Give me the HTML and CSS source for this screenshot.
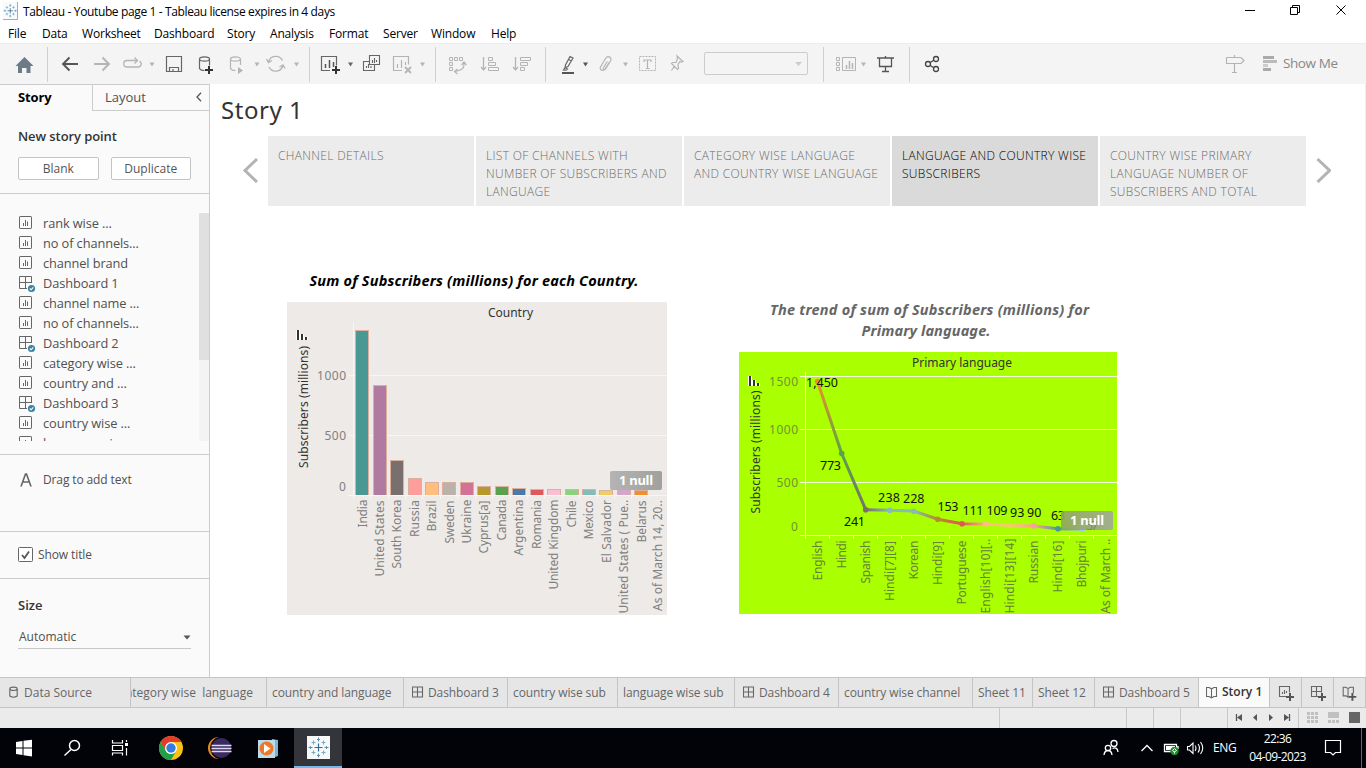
FILE: index.html
```html
<!DOCTYPE html>
<html lang="en">
<head>
<meta charset="utf-8">
<title>Tableau - Youtube page 1</title>
<link rel="stylesheet" href="styles.css">
</head>
<body>
<svg class="defs" width="0" height="0" aria-hidden="true">
  <symbol id="sheet" viewBox="0 0 18 18"><rect x="1.500" y="1.500" width="12" height="12" rx=".6"/><path d="M5.500 8v3M7.500 5v6M9.500 6.500v4.500"/></symbol>
  <symbol id="dash" viewBox="0 0 18 18"><path d="M13.500 8V1.500h-12v12h7.500M7.500 1.500v12M1.500 7.500h12"/><circle cx="13.500" cy="13.500" r="3.600" fill="#3a83a3" stroke="none"/><path d="M11.800 13.500l1.300 1.300 2.200-2.500" stroke="#fff" stroke-width="1.100"/></symbol>
  <symbol id="grid" viewBox="0 0 12 12"><path d="M.5 .5h10v10h-10zM5.500 .5v10M.5 5.500h10"/></symbol>
  <symbol id="book" viewBox="0 0 12 13"><path d="M.5 1.500h2.500l2.500 1.300 2.500-1.300h2.500v9h-2.500l-2.500 1.300-2.500-1.300h-2.500zM5.500 3v8.500"/></symbol>
  <symbol id="mark" viewBox="0 0 22 22"><path d="M11 7v8M7 11h8" stroke="#356c93" stroke-width="1.200"/><path d="M6 4v4M4 6h4M16 4v4M14 6h4M6 14v4M4 16h4M16 14v4M14 16h4" stroke="#6fb0d0" stroke-width="1.100"/><path d="M11 1v4M9.500 3h3M11 17v4M9.500 19h3M1 11h4M3 9.500v3M17 11h4M19 9.500v3" stroke="#5d90b2"/></symbol>
</svg>
<div class="app">
  <header class="titlebar">
    <svg class="appicon" viewBox="0 0 16 18"><rect x="0" y="0" width="15" height="18" fill="#f8fafb"/><path d="M0 17.500h14.500V0" stroke="#aaa"/><use href="#mark" x="0" y="1.500" width="14.500" height="14.500"/></svg>
    <span class="apptitle">Tableau - Youtube page 1 - Tableau license expires in 4 days</span>
    <svg class="winctl" viewBox="1230 0 136 22" stroke="#000"><path d="M1245 10.500h10M1290.500 7.500h7v7h-7zM1292.500 7.500v-2h7v7h-2M1336.500 5.500l9 9M1345.500 5.500l-9 9"/></svg>
  </header>
  <nav class="menu"><span class="m1">File</span><span class="m2">Data</span><span class="m3">Worksheet</span><span class="m4">Dashboard</span><span class="m5">Story</span><span class="m6">Analysis</span><span class="m7">Format</span><span class="m8">Server</span><span class="m9">Window</span><span class="m10">Help</span></nav>
  <div class="toolbar">
    <svg class="g g1" viewBox="0 44 47 40"><path d="M15.500 66l9-9 9 9h-3v7h-4v-5h-4.500v5h-4v-7z" fill="#6d7b89" stroke="none"/></svg>
    <svg class="g g2" viewBox="48 44 261 40">
      <g stroke="#555" stroke-width="1.900"><path d="M63 64h15M69.500 57.500L63 64l6.500 6.500"/></g>
      <g stroke="#b4b4b4" stroke-width="1.900"><path d="M94 64h15M102.500 57.500L109 64l-6.500 6.500"/></g>
      <g stroke="#b4b4b4" stroke-width="1.300"><path d="M129 60.500h-2a3 3 0 0 0 0 6.500h11a3 3 0 0 0 1.500-5.700M129 60.500h8M134.500 57.500l3 3-3 3"/></g>
      <g stroke="#666" stroke-width="1.200"><path d="M166.500 56.500h15v15h-15zM169.500 71.500v-4h9v4M173 71v-2"/></g>
      <g stroke="#666" stroke-width="1.200"><path d="M199.500 59v9.500q1 2 5 2M199.500 59a5 2.200 0 0 1 10 0a5 2.200 0 0 1-10 0M209.500 59v6.500"/><path d="M209 66v8M205 70h8" stroke="#333" stroke-width="2"/></g>
      <g stroke="#b4b4b4" stroke-width="1.200"><path d="M230.500 59v9.500q1 2 5 2M230.500 59a5 2.200 0 0 1 10 0a5 2.200 0 0 1-10 0M240.500 59v6"/><path d="M238 67v7l5-3.500z" fill="#b4b4b4" stroke="none"/></g>
      <g stroke="#b4b4b4" stroke-width="1.300"><path d="M268.500 62a7.500 7.500 0 0 1 14-1.500M283 65.500a7.500 7.500 0 0 1-14 1.500M266.500 59l2 3.500 3.500-2M285 68.500l-2-3.500-3.500 2"/></g>
      <g fill="#b4b4b4" stroke="none"><path d="M149.500 62.500h5l-2.500 4zM254.500 62.500h5l-2.500 4zM294 62.500h5l-2.500 4z"/></g>
    </svg>
    <svg class="g g3" viewBox="310 44 125 40">
      <path d="M330 70.500h-8.500v-14h15v9" stroke="#666" stroke-width="1.200"/><path d="M325.500 64v4M329.500 60v8M333.500 62v5" stroke="#555" stroke-width="1.500"/><path d="M336 66v8M332 70h8" stroke="#333" stroke-width="2"/>
      <path d="M348 62.500h5l-2.500 4z" fill="#666" stroke="none"/>
      <g stroke="#666" stroke-width="1.100"><path d="M369.500 55.500h10v9h-10zM369 61.500h-5.500v9h11v-5.500M372.500 60v3M374.500 58v5M376.500 60v2M366.500 66v2M368.500 64v4M371 66v2"/></g>
      <g stroke="#b4b4b4" stroke-width="1.200"><path d="M402 70.500h-8.500v-14h15v8M397.500 64v4M401.500 60v8M405.500 62v3"/><path d="M405 67l6 6M411 67l-6 6" stroke-width="1.800"/></g>
      <path d="M420 62.500h5l-2.500 4z" fill="#b4b4b4" stroke="none"/>
    </svg>
    <svg class="g g4" viewBox="436 44 109 40" stroke="#b4b4b4">
      <path d="M449.500 57.500h3v3h-3zM454.500 57.500h3v3h-3zM459.500 57.500h3v3h-3zM449.500 62.500h3v3h-3zM449.500 67.500h3v3h-3z"/><path d="M464 62v3q0 5-9 6.500M461.500 65l2.500-3 2.500 3M457.500 69l-3 2.500 3 2.500" stroke-width="1.200"/>
      <path d="M483.500 57v13M481 67l2.500 3 2.500-3M515.500 57v13M513 67l2.500 3 2.500-3" stroke-width="1.300"/>
      <path d="M488.500 57.500h4v3h-4zM488.500 62.500h7v3h-7zM488.500 67.500h10v3h-10zM520.500 57.500h10v3h-10zM520.500 62.500h7v3h-7zM520.500 67.500h4v3h-4z"/>
    </svg>
    <svg class="g g5" viewBox="546 44 158 40">
      <path d="M565 67.500l.500-2.500 4.500-8.500 3 1.500-5 8.500zM563.500 70l1.500-2.500 2.500 1.500-1.500 1.200zM568.500 59.500l3 1.500" stroke="#666" stroke-width="1.200"/><path d="M562 73h12" stroke="#555" stroke-width="2"/><path d="M583 62.500h5l-2.500 4z" fill="#555" stroke="none"/>
      <path d="M609.500 62l-4.500 7c-2 3-6 .8-4.500-2l5-8.500c2.500-3.500 7-1 5 2.500l-5 8c-1.500 1.500-3 .500-2.200-1l4-6.500" stroke="#b4b4b4" stroke-width="1.200"/><path d="M623 62.500h5l-2.500 4z" fill="#b4b4b4" stroke="none"/>
      <rect x="639.500" y="56.500" width="16" height="14" stroke="#b4b4b4" stroke-dasharray="2 1"/><path d="M644 62v-2h7v2M647.500 60v8M646 68.500h3.500" stroke="#b4b4b4" stroke-width="1.200"/>
      <path d="M677 56l6 5.500-1.500.500-1.500-.500-2 3 .500 4-1 1-6-6 1-1 3.500 0 1.500-4zM674.500 66l-3 4.500" stroke="#b4b4b4" stroke-width="1.200"/>
    </svg>
    <div class="fit"><svg viewBox="0 0 10 6"><path d="M2 1h7l-3.500 4z" fill="#ccc" stroke="none"/></svg></div>
    <svg class="g g6" viewBox="824 44 85 40">
      <path d="M836.500 57.500h3v3h-3zM836.500 62.500h3v3h-3zM836.500 67.500h3v3h-3zM842.500 57.500h13v13h-13z" stroke="#b4b4b4"/><path d="M846.500 65v4M849.500 61v8M852.500 63v6" stroke="#b4b4b4" stroke-width="1.500"/><path d="M861 62.500h5l-2.500 4z" fill="#b4b4b4" stroke="none"/>
      <path d="M877 58h17M879.500 58v8.500h12V58M885.500 56v2M885.500 66.500v5M882 71.500h7" stroke="#555" stroke-width="1.300"/>
    </svg>
    <svg class="g g7" viewBox="910 44 330 40"><g stroke="#444" stroke-width="1.300"><circle cx="928" cy="64" r="2.500"/><circle cx="936" cy="59" r="2.500"/><circle cx="936" cy="69" r="2.500"/><path d="M930.200 62.500l3.600-2.200M930.200 65.500l3.600 2.200"/></g><path d="M1226.500 57.500H1240M1226.500 57.500v6H1240M1234.500 55v2.500M1234.500 63.500v8.500M1232 72.500h5" stroke="#b4b4b4" stroke-width="1.200"/></svg>
    <svg class="g g8" viewBox="1240 44 43 40"><path d="M1240 57.500h1l3 3-3 3h-1" stroke="#b4b4b4" stroke-width="1.200"/><path d="M1263 56h11v3h-11zM1263 68h8v3h-8z" fill="#aaa" stroke="none"/><path d="M1263 60h14v3h-14z" fill="#bbb" stroke="none"/><path d="M1263 64h5v3h-5z" fill="#ccc" stroke="none"/></svg>
    <span class="showme">Show Me</span>
  </div>
  <main class="main">
    <aside class="side">
      <div class="tabs"><b>Story</b><div><span>Layout</span><svg viewBox="0 0 8 10"><path d="M6 .8L2 5l4 4.200" stroke="#555" stroke-width="1.300"/></svg></div></div>
      <section class="new"><h3>New story point</h3><div><button>Blank</button><button>Duplicate</button></div></section>
      <section class="list">
        <ul>
          <li><svg><use href="#sheet"/></svg>rank wise ...</li>
          <li><svg><use href="#sheet"/></svg>no of channels...</li>
          <li><svg><use href="#sheet"/></svg>channel brand</li>
          <li><svg><use href="#dash"/></svg>Dashboard 1</li>
          <li><svg><use href="#sheet"/></svg>channel name ...</li>
          <li><svg><use href="#sheet"/></svg>no of channels...</li>
          <li><svg><use href="#dash"/></svg>Dashboard 2</li>
          <li><svg><use href="#sheet"/></svg>category wise ...</li>
          <li><svg><use href="#sheet"/></svg>country and ...</li>
          <li><svg><use href="#dash"/></svg>Dashboard 3</li>
          <li><svg><use href="#sheet"/></svg>country wise ...</li>
          <li><svg><use href="#sheet"/></svg>language wise ...</li>
        </ul>
        <div class="scroll"><i></i></div>
      </section>
      <section class="drag"><svg viewBox="0 0 12 14"><path d="M1 13.500L5.500 1h1L11 13.500M2.800 9h6.500" stroke="#666" stroke-width="1.600"/></svg>Drag to add text</section>
      <section class="show"><svg viewBox="0 0 15 15"><rect x=".5" y=".5" width="14" height="14" rx="1" fill="#fff" stroke="#666"/><path d="M4 8l2.500 3 4.500-6.500" stroke="#555" stroke-width="1.800"/></svg>Show title</section>
      <section class="size"><h3>Size</h3><div>Automatic<svg viewBox="0 0 8 5"><path d="M.5 .5h7l-3.500 4z" fill="#555" stroke="none"/></svg></div></section>
    </aside>
    <div class="canvas">
      <h1>Story 1</h1>
      <div class="points">
        <svg class="arrow" viewBox="0 0 16 26"><path d="M15 2L3 13.500 15 25"/></svg>
        <div class="pt">CHANNEL DETAILS</div>
        <div class="pt">LIST OF CHANNELS WITH<br>NUMBER OF SUBSCRIBERS AND<br>LANGUAGE</div>
        <div class="pt">CATEGORY WISE LANGUAGE<br>AND COUNTRY WISE LANGUAGE</div>
        <div class="pt on">LANGUAGE AND COUNTRY WISE<br>SUBSCRIBERS</div>
        <div class="pt">COUNTRY WISE PRIMARY<br>LANGUAGE NUMBER OF<br>SUBSCRIBERS AND TOTAL</div>
        <svg class="arrow r" viewBox="0 0 16 26"><path d="M2.500 2L14.500 13.500 2.500 25"/></svg>
      </div>
      <div class="charts">
        <svg class="bars" viewBox="287 262 380 354">
          <text x="309.500" y="286" textLength="329" class="ttl">Sum of Subscribers (millions) for each Country.</text>
          <rect x="287" y="302" width="380" height="313" fill="#eeeae7"/>
          <path d="M348 375.500h319M348 435.500h319M353.500 322v173M348 495.500h319" stroke="#f8f6f5"/>
          <path d="M353.500 495v4M370.500 495v4M388.500 495v4M405.500 495v4M422.500 495v4M440.500 495v4M457.500 495v4M475.500 495v4M492.500 495v4M510.500 495v4M527.500 495v4M544.500 495v4M562.500 495v4M579.500 495v4M597.500 495v4M614.500 495v4M631.500 495v4M649.500 495v4" stroke="#f8f6f5"/>
          <text x="488" y="317" textLength="45" class="hd">Country</text>
          <g class="num"><text x="317" y="380" textLength="29">1000</text><text x="324.500" y="440" textLength="21.500">500</text><text x="339" y="491">0</text></g>
          <text transform="translate(307.500 468) rotate(-90)" textLength="122" class="hd">Subscribers (millions)</text>
          <path d="M298 330v10M302 334v6M306 337v3" stroke="#fff" stroke-width="4"/><path d="M298 330v10M302 334v6M306 337v3" stroke="#333" stroke-width="2"/>
          <g stroke="#dcb09f">
            <rect x="355.500" y="330.500" width="13" height="165" fill="#499894"/><rect x="373.500" y="385.500" width="13" height="110" fill="#b07aa1"/><rect x="390.500" y="460.500" width="13" height="35" fill="#79706e"/><rect x="408.500" y="478.500" width="13" height="17" fill="#ff9d9a"/><rect x="425.500" y="482.500" width="13" height="13" fill="#ffbe7d"/><rect x="442.500" y="482.500" width="13" height="13" fill="#bab0ac"/><rect x="460.500" y="482.500" width="13" height="13" fill="#d37295"/><rect x="477.500" y="486.500" width="13" height="9" fill="#b6992d"/><rect x="495.500" y="486.500" width="13" height="9" fill="#59a14f"/><rect x="512.500" y="488.500" width="13" height="7" fill="#4e79a7"/><rect x="530.500" y="489.500" width="13" height="6" fill="#e15759"/><rect x="547.500" y="489.500" width="13" height="6" fill="#fabfd2"/><rect x="565.500" y="489.500" width="13" height="6" fill="#8cd17d"/><rect x="582.500" y="489.500" width="13" height="6" fill="#86bcb6"/><rect x="599.500" y="490.500" width="13" height="5" fill="#f1ce63"/><rect x="617.500" y="489.500" width="13" height="6" fill="#d4a6c8"/><rect x="634.500" y="490.500" width="13" height="5" fill="#f28e2b"/>
          </g>
          <path d="M353 495.500h314" stroke="#f8f6f5"/>
          <g class="lab">
            <text transform="translate(366.500 527.500) rotate(-90)" textLength="28">India</text>
            <text transform="translate(383.500 576.500) rotate(-90)" textLength="76">United States</text>
            <text transform="translate(400.500 568.500) rotate(-90)" textLength="69">South Korea</text>
            <text transform="translate(418.500 537) rotate(-90)" textLength="37">Russia</text>
            <text transform="translate(435.500 531.500) rotate(-90)" textLength="31">Brazil</text>
            <text transform="translate(453.500 543.500) rotate(-90)" textLength="43">Sweden</text>
            <text transform="translate(470.500 543.500) rotate(-90)" textLength="44">Ukraine</text>
            <text transform="translate(488 553.500) rotate(-90)" textLength="53">Cyprus[a]</text>
            <text transform="translate(505.500 540.500) rotate(-90)" textLength="41">Canada</text>
            <text transform="translate(523 555.500) rotate(-90)" textLength="56">Argentina</text>
            <text transform="translate(540.500 549) rotate(-90)" textLength="49">Romania</text>
            <text transform="translate(557.500 589.500) rotate(-90)" textLength="90">United Kingdom</text>
            <text transform="translate(575.500 527.500) rotate(-90)" textLength="27">Chile</text>
            <text transform="translate(592.500 539.500) rotate(-90)" textLength="39">Mexico</text>
            <text transform="translate(610.500 563) rotate(-90)" textLength="63">El Salvador</text>
            <text transform="translate(627.500 613.500) rotate(-90)" textLength="114">United States ( Pue..</text>
            <text transform="translate(645.500 542.500) rotate(-90)" textLength="42">Belarus</text>
            <text transform="translate(662 611) rotate(-90)" textLength="111">As of March 14, 20..</text>
          </g>
          <defs><linearGradient id="nul"><stop offset="0" stop-color="#b4b4b2"/><stop offset="1" stop-color="#a0a09e"/></linearGradient><linearGradient id="nug"><stop offset="0" stop-color="#90a65f"/><stop offset="1" stop-color="#a2a89a"/></linearGradient></defs>
          <rect x="610" y="471" width="52" height="19" rx="2" fill="url(#nul)"/><text x="619" y="485" textLength="34" class="null">1 null</text>
        </svg>
        <svg class="line" viewBox="739 262 378 354">
          <text x="770" y="315" textLength="319" class="ttl gray">The trend of sum of Subscribers (millions) for</text>
          <text x="861.500" y="336" textLength="129" class="ttl gray">Primary language.</text>
          <rect x="739" y="352" width="378" height="262" fill="#af0"/>
          <path d="M800 376.500h317M800 429.500h317M800 482.500h317M800 535.500h317M805.500 372v167M829.500 536v3M853.500 536v3M877.500 536v3M901.500 536v3M925.500 536v3M949.500 536v3M973.500 536v3M997.500 536v3M1021.500 536v3M1045.500 536v3M1069.500 536v3M1093.500 536v3" stroke="#f4ffdd"/>
          <text x="912" y="367" textLength="100" class="hd">Primary language</text>
          <path d="M750 376v10M754 380v6M758 383v3" stroke="#fff" stroke-width="4"/><path d="M750 376v10M754 380v6M758 383v3" stroke="#333" stroke-width="2"/>
          <text transform="translate(759.500 513.500) rotate(-90)" textLength="123" class="hd">Subscribers (millions)</text>
          <g class="num gr"><text x="769" y="386" textLength="29">1500</text><text x="769" y="434" textLength="29">1000</text><text x="776.500" y="487" textLength="21.500">500</text><text x="791" y="531">0</text></g>
          <defs>
            <linearGradient id="l1" gradientUnits="userSpaceOnUse" x1="817" y1="381" x2="842" y2="454"><stop offset="0" stop-color="#f28e2b"/><stop offset="1" stop-color="#59a14f"/></linearGradient>
            <linearGradient id="l2" gradientUnits="userSpaceOnUse" x1="842" y1="454" x2="866" y2="510"><stop offset="0" stop-color="#59a14f"/><stop offset="1" stop-color="#79706e"/></linearGradient>
            <linearGradient id="l3" gradientUnits="userSpaceOnUse" x1="866" y1="0" x2="1083" y2="0"><stop offset="0" stop-color="#79706e"/><stop offset=".11" stop-color="#86bcb6"/><stop offset=".22" stop-color="#86bcb6"/><stop offset=".33" stop-color="#b68a2d"/><stop offset=".44" stop-color="#e15759"/><stop offset=".56" stop-color="#ffbe7d"/><stop offset=".67" stop-color="#f1ce63"/><stop offset=".78" stop-color="#ff9d9a"/><stop offset=".89" stop-color="#499894"/><stop offset="1" stop-color="#a0cbe8"/></linearGradient>
          </defs>
          <g stroke-width="3" stroke-linecap="round"><path d="M817.500 381.500L841.700 453.500" stroke="url(#l1)"/><path d="M841.700 453.500L865.700 509.700" stroke="url(#l2)"/><path d="M865.700 509.700L889.700 510.300 913.800 511 937.800 519.200 962 523.700 986 524 1010 525.500 1034 526 1058 528.800 1082.500 529.300" stroke="url(#l3)"/></g>
          <g stroke="none"><circle cx="817.500" cy="381.500" r="2.800" fill="#f28e2b"/><circle cx="841.700" cy="453.500" r="2.800" fill="#59a14f"/><circle cx="865.700" cy="509.700" r="2.800" fill="#79706e"/><circle cx="889.700" cy="510.300" r="2.800" fill="#86bcb6"/><circle cx="913.800" cy="511.300" r="2.800" fill="#86bcb6"/><circle cx="937.800" cy="519.200" r="2.800" fill="#b68a2d"/><circle cx="962" cy="523.700" r="2.800" fill="#e15759"/><circle cx="986" cy="524" r="2.800" fill="#ffbe7d"/><circle cx="1010" cy="525.500" r="2.800" fill="#f1ce63"/><circle cx="1034" cy="526" r="2.800" fill="#ff9d9a"/><circle cx="1058" cy="528.800" r="2.800" fill="#499894"/><circle cx="1082.500" cy="529.300" r="2.800" fill="#a0cbe8"/></g>
          <g class="val"><text x="806" y="387" textLength="32">1,450</text><text x="820" y="470" textLength="21">773</text><text x="844" y="526" textLength="21">241</text><text x="878" y="502" textLength="22">238</text><text x="903" y="503" textLength="21.500">228</text><text x="937.500" y="511" textLength="21">153</text><text x="962.500" y="515" textLength="21">111</text><text x="986.500" y="515" textLength="21">109</text><text x="1010" y="517" textLength="14.500">93</text><text x="1027" y="517" textLength="14.500">90</text><text x="1051" y="520" textLength="14">63</text></g>
          <g class="lab gr">
            <text transform="translate(822 580.500) rotate(-90)" textLength="40">English</text>
            <text transform="translate(846 568.500) rotate(-90)" textLength="28">Hindi</text>
            <text transform="translate(870 583.500) rotate(-90)" textLength="43">Spanish</text>
            <text transform="translate(894 601) rotate(-90)" textLength="60">Hindi[7][8]</text>
            <text transform="translate(918 579.500) rotate(-90)" textLength="39">Korean</text>
            <text transform="translate(942 585) rotate(-90)" textLength="44">Hindi[9]</text>
            <text transform="translate(966 604.500) rotate(-90)" textLength="64">Portuguese</text>
            <text transform="translate(990 613.500) rotate(-90)" textLength="75">English[10][..</text>
            <text transform="translate(1014 613.500) rotate(-90)" textLength="75">Hindi[13][14]</text>
            <text transform="translate(1038 583.500) rotate(-90)" textLength="43">Russian</text>
            <text transform="translate(1062 592.500) rotate(-90)" textLength="52">Hindi[16]</text>
            <text transform="translate(1086 587.500) rotate(-90)" textLength="47">Bhojpuri</text>
            <text transform="translate(1110 613.500) rotate(-90)" textLength="75">As of March ..</text>
          </g>
          <rect x="1061" y="511" width="52" height="19" rx="2" fill="url(#nug)" opacity=".92"/>
          <text x="1086" y="530" textLength="12.500" class="faint">57</text>
          <text x="1070" y="525" textLength="34" class="null">1 null</text>
        </svg>
      </div>
    </div>
  </main>
  <div class="sheets">
    <span class="s1"><svg viewBox="0 0 10 13"><path d="M.8 3v7q3.700 2.500 7.400 0v-7M.8 2.800a3.700 1.700 0 0 1 7.400 0a3.700 1.700 0 0 1-7.400 0"/></svg>Data Source</span>
    <span class="s2">category wise&nbsp; language</span>
    <span class="s3">country and language</span>
    <span class="s4"><svg><use href="#grid"/></svg>Dashboard 3</span>
    <span class="s5">country wise sub</span>
    <span class="s6">language wise sub</span>
    <span class="s7"><svg><use href="#grid"/></svg>Dashboard 4</span>
    <span class="s8">country wise channel</span>
    <span class="s9">Sheet 11</span>
    <span class="s10">Sheet 12</span>
    <span class="s11"><svg><use href="#grid"/></svg>Dashboard 5</span>
    <span class="s12"><svg><use href="#book"/></svg>Story 1</span>
    <svg class="add" viewBox="1270 678 31 29"><path d="M1288 696.500h-8.500v-10h10v6M1282.500 692v2M1284.500 690v4M1286.500 691v2"/><path class="plus" d="M1290 693v8M1286 697h8"/></svg>
    <svg class="add" viewBox="1302 678 31 29"><path d="M1318 696.500h-6.500v-10h10v6M1316.500 686.500v10M1311.500 691.500h10"/><path class="plus" d="M1322 693v8M1318 697h8"/></svg>
    <svg class="add" viewBox="1334 678 32 29"><path d="M1348.500 697.500l-2-1.500h-3v-9h2.500l2.500 1.300 2.500-1.300h3v6M1348.500 689v9"/><path class="plus" d="M1353 693v8M1349 697h8"/></svg>
  </div>
  <div class="status"><i class="w1"></i><i class="w2"></i><i class="w3"></i><i class="w3"></i><i class="w4"></i>
    <svg class="w5" viewBox="1228 708 70 20"><path d="M1236.500 714v7M1289.500 714v7" stroke="#555" stroke-width="1.300"/><path d="M1242 714v7l-5-3.500zM1257 714v7l-4-3.500zM1269 714v7l4-3.500zM1284 714v7l5-3.500z" fill="#555" stroke="none"/></svg>
    <svg class="w6" viewBox="1299 708 67 20" stroke="none"><path d="M1307 712h3v3h-3zM1311 712h3v3h-3zM1315 712h3v3h-3zM1307 716h3v3h-3zM1311 716h3v3h-3zM1315 716h3v3h-3zM1307 720h3v3h-3zM1311 720h3v3h-3zM1315 720h3v3h-3zM1328 712h11v6h-11zM1328 720h3v3h-3zM1332 720h3v3h-3zM1336 720h3v3h-3z" fill="#c0c0c0"/><path d="M1349 712h11v11h-11z" fill="#666"/></svg>
  </div>
  <footer class="taskbar">
    <svg class="tb1" viewBox="0 728 294 40">
      <path d="M16 742l6.500-1v6.500H16zM23.500 740.800l8.500-1v7.700h-8.500zM16 748.500h6.500v6.500l-6.500-1zM23.500 748.500H32v8l-8.500-1.200z" fill="#fff" stroke="none"/>
      <g stroke="#fff" stroke-width="1.500"><circle cx="74.500" cy="745.500" r="5"/><path d="M71 749.500l-6.500 6"/></g>
      <g stroke="#fff" stroke-width="1.200"><path d="M112.500 740v3h10v-3M112.500 745.500h10v5h-10zM112.500 755.500v-2.500h10v2.500M126.500 740v2M126.500 748v7.500"/><path d="M125 743h3v3h-3z" fill="#fff" stroke="none"/></g>
      <g stroke="none"><circle cx="171" cy="748" r="12" fill="#fbc116"/><path d="M171 742h10.400A12 12 0 0 0 160.600 742L165.800 751z" fill="#e33b2e"/><path d="M160.600 742A12 12 0 0 0 171 760L176.200 751a6 6 0 0 1-10.400 0z" fill="#20a04b"/><circle cx="171" cy="748" r="6" fill="#fff"/><circle cx="171" cy="748" r="4.700" fill="#347de0"/></g>
      <g stroke="none"><circle cx="219" cy="748" r="11" fill="#e88b22"/><circle cx="221.500" cy="748" r="11.300" fill="#010308"/><circle cx="221.300" cy="748" r="10" fill="#392b61"/></g><path d="M211.500 745.500h20M211.500 748.500h20M211.500 751.500h20" stroke="#ded9ef" stroke-width="1.400"/>
      <g stroke="none"><path d="M272 739l6 1v16l-6 2z" fill="#78b5d7"/><rect x="258" y="740" width="17" height="18" fill="#b9dbea"/><circle cx="266.500" cy="748.500" r="7" fill="#ee7827"/><path d="M264 744l6.500 4.500-6.500 4.500z" fill="#fff"/></g>
    </svg>
    <div class="active"><svg viewBox="0 0 23 23"><rect width="23" height="23" fill="#f7f8f8"/><use href="#mark" x=".5" y=".5" width="22" height="22"/></svg></div>
    <svg class="tray" viewBox="1096 728 110 40" stroke="#fff" stroke-width="1.300">
      <circle cx="1114" cy="743.500" r="3"/><circle cx="1108" cy="748" r="2.700"/><path d="M1104 755q.5-4.500 4-4.500t4 4.500M1112.500 748.500q5-2 5.500 3.500M1141.500 751l5.500-5.500 5.500 5.500"/>
      <path d="M1164.500 744.500h12v7h-12zM1178 746v3"/><path d="M1166 746h9v4h-9z" fill="#fff" stroke="none"/><circle cx="1174.500" cy="751" r="4.200" fill="#18932b" stroke="none"/><path d="M1174.500 753.500v-2M1172.500 750.500l2-2 2 2-2 1.500z" stroke-width="1"/>
      <path d="M1187.500 746.500h2l3.500-3.500v10.500l-3.500-3.500h-2zM1195 745.500q2 2.500 0 5.500M1198 744q3 4 0 8.500M1200.500 742q4.500 6 0 12" stroke-width="1.100"/>
    </svg>
    <span class="eng">ENG</span><span class="clock">22:36<br>04-09-2023</span>
    <svg class="note" viewBox="1316 728 50 40" stroke="#fff"><path d="M1325.500 740.500h15v12h-5l-2.500 2.500-2.500-2.500h-5z" stroke-width="1.200"/><path d="M1361.500 728v40" stroke="#666"/></svg>
  </footer>
</div>
</body>
</html>
```
FILE: styles.css
```css
* { box-sizing: border-box; }
body { margin: 0; background: #fff; font-family: "Open Sans", "Noto Sans", sans-serif; font-size: 12px; color: #333; }
svg { display: block; fill: none; flex: none; }
svg text { stroke: none; white-space: pre; }
.defs { position: absolute; }
.app { width: 1366px; height: 768px; display: flex; flex-direction: column; overflow: hidden; }

.titlebar { height: 24px; display: flex; color: #000; }
.appicon { width: 16px; height: 18px; margin: 2px 0 0 3px; }
.apptitle { margin-left: 4px; line-height: 23px; font-size: 12px; letter-spacing: -.37px; }
.winctl { width: 136px; height: 22px; margin-left: auto; }
.menu { height: 19px; display: flex; line-height: 20px; color: #000; white-space: nowrap; padding-left: 8px; letter-spacing: -.18px; }
.m1 { width: 34px; } .m2 { width: 40px; } .m3 { width: 72px; } .m4 { width: 73px; } .m5 { width: 43px; }
.m6 { width: 59px; } .m7 { width: 54px; } .m8 { width: 48px; } .m9 { width: 60px; }

.toolbar { height: 41px; display: flex; background: #f4f4f4; border-top: 1px solid #ececec; }
.g { height: 40px; }
.g1 { width: 47px; } .g2 { width: 261px; } .g3 { width: 125px; } .g4 { width: 109px; } .g5 { width: 158px; }
.g6 { width: 85px; } .g7 { width: 330px; } .g8 { width: 43px; }
.g2, .g3, .g4, .g5, .g6, .g7 { background: linear-gradient(#d0d0d0, #d0d0d0) 0 3px / 1px 35px no-repeat; }
.g2, .g3, .g4, .g5, .g7 { box-sizing: content-box; padding-left: 1px; }
.g6 { box-sizing: content-box; padding-left: 1px; margin-left: 15px; }
.fit { width: 104px; height: 23px; margin-top: 8px; border: 1px solid #ccc; border-radius: 2px; display: flex; align-items: center; justify-content: flex-end; padding-right: 4px; flex: none; }
.fit svg { width: 10px; height: 6px; }
.showme { font-size: 13.500px; line-height: 39px; color: #888; white-space: nowrap; letter-spacing: -.42px; }

.main { height: 593px; display: flex; }
.side { width: 210px; background: #fafafa; border-right: 1px solid #ccc; border-top: 1px solid #ccc; color: #505050; }
.tabs { display: flex; height: 26px; }
.tabs b { width: 92px; padding-left: 18px; line-height: 25px; font-size: 13px; color: #000; letter-spacing: -.1px; }
.tabs div { flex: 1; display: flex; border-left: 1px solid #ccc; border-bottom: 1px solid #ccc; padding: 0 6px 0 12px; justify-content: space-between; line-height: 25px; font-size: 13px; }
.tabs svg { width: 8px; height: 10px; margin-top: 7px; }
.side section { border-bottom: 1px solid #ccc; }
.side h3 { margin: 0; font-size: 13px; font-weight: 600; color: #333; }
.new { height: 83px; padding: 15px 18px 0; }
.new h3 { line-height: 20px; margin-bottom: 11px; letter-spacing: -.08px; }
.new div { display: flex; gap: 12px; }
.new button { flex: 1; height: 23px; padding: 0; background: #fff; border: 1px solid #c4c4c4; border-radius: 2px; font: 12px/20px "Open Sans", sans-serif; color: #555; }
.list { height: 261px; padding: 19px 0 13px; display: flex; }
.list ul { list-style: none; margin: 0; padding: 0 0 0 18px; height: 228px; flex: 1; overflow: hidden; }
.list li { height: 20px; display: flex; line-height: 21px; font-size: 12.800px; white-space: nowrap; letter-spacing: -.1px; }
.list li svg { width: 18px; height: 18px; margin: 2px 7px 0 0; stroke: #666; }
.scroll { width: 10px; height: 228px; background: #f3f3f3; }
.scroll i { display: block; height: 147px; background: #e0e0e0; }
.drag { height: 77px; display: flex; padding: 15px 0 0 20px; line-height: 20px; letter-spacing: -.12px; }
.drag svg { width: 12px; height: 14px; margin: 3px 11px 0 0; }
.show { height: 47px; display: flex; padding: 15px 0 0 18px; line-height: 15px; letter-spacing: -.1px; }
.show svg { width: 15px; height: 15px; margin-right: 5px; }
.side .size { border: 0; padding: 15px 18px 0; }
.size h3 { line-height: 22px; margin-bottom: 11px; }
.size div { display: flex; justify-content: space-between; height: 22px; line-height: 19px; border-bottom: 1px solid #c8c8c8; padding-left: 1px; }
.size svg { width: 8px; height: 5px; margin-top: 8px; }

.canvas { flex: 1; border-right: 1px solid #eee; }
.canvas h1 { margin: 0; height: 52px; padding-left: 11px; font: 400 24px/51px "Noto Sans", sans-serif; letter-spacing: .55px; color: #333; }
.points { display: flex; height: 70px; padding-left: 32px; gap: 2px; align-items: stretch; }
.arrow { width: 16px; height: 26px; margin: 21px 8px 0 0; stroke: #b3b3b3; stroke-width: 3; }
.arrow.r { margin: 21px 0 0 7px; }
.pt { width: 206px; background: #ececec; padding: 11px 0 0 10px; font-size: 12px; line-height: 18px; color: #6c6c6c; white-space: nowrap; font-weight: 300; letter-spacing: .33px; }
.pt.on { background: #dadada; color: #000; }
.charts { display: flex; padding: 56px 0 0 77px; gap: 72px; }
.bars { width: 380px; height: 354px; }
.line { width: 378px; height: 354px; }
.charts text { font-family: "Noto Sans", sans-serif; font-size: 12px; }
.charts .ttl { font-size: 14.500px; font-weight: 700; font-style: italic; fill: #000; }
.charts .ttl.gray { fill: #666; }
.charts .hd { fill: #333; }
.num, .lab { fill: #808080; }
.num.gr { fill: #6f9433; }
.lab.gr { fill: #668338; }
.val { fill: #111; }
.charts .faint { fill: #7d8860; font-size: 12.500px; }
.charts .val text { font-size: 12.500px; }
.charts .null { fill: #fff; font-weight: 700; font-size: 13px; }

.sheets { height: 31px; display: flex; background: #e6e6e6; border-top: 1px solid #c4c4c4; border-bottom: 1px solid #c4c4c4; color: #666; line-height: 30px; letter-spacing: -.1px; }
.sheets span { display: flex; white-space: nowrap; overflow: hidden; border-right: 1px solid #c4c4c4; padding-left: 5px; flex: none; }
.sheets svg { stroke: #666; stroke-width: 1.100; }
.sheets span svg { width: 12px; height: 13px; margin: 8px 4px 0 3px; }
.sheets .s1 { width: 131px; padding-left: 6px; letter-spacing: 0; } .s1 svg:first-child { width: 10px; margin-right: 5px; }
.sheets .s2 { width: 136px; padding-right: 13px; justify-content: flex-end; padding-left: 0; letter-spacing: 0; }
.s3 { width: 137px; } .s4 { width: 104px; } .s5 { width: 110px; } .s6 { width: 117px; } .s7 { width: 104px; } .s8 { width: 134px; }
.s9 { width: 60px; } .s10 { width: 62px; } .s11 { width: 104px; }
.sheets .s12 { width: 71px; background: #fafafa; font-weight: 600; color: #333; padding-left: 4px; line-height: 28px; letter-spacing: 0; }
.add { width: 32px; height: 29px; border-right: 1px solid #c4c4c4; }
.add .plus { stroke: #555; stroke-width: 2; }
.status { height: 20px; display: flex; background: #ebebeb; }
.status > * { border-right: 1px solid #c8c8c8; height: 20px; }
.w1 { width: 1000px; } .w2 { width: 127px; } .w3 { width: 27px; } .w4 { width: 47px; } .w5 { width: 71px; } .status .w6 { width: 67px; border: 0; }

.taskbar { height: 40px; display: flex; background: #010308; color: #fff; }
.tb1 { width: 294px; height: 40px; }
.active { width: 48px; background: #33353a; border-bottom: 2px solid #76b9ed; display: flex; justify-content: center; padding-top: 8px; }
.active svg { width: 23px; height: 23px; }
.tray { width: 110px; height: 40px; margin-left: 754px; }
.eng { width: 38px; padding-left: 7px; line-height: 39px; letter-spacing: -.4px; }
.clock { width: 67px; margin-right: 5px; text-align: center; line-height: 18px; padding-top: 2px; font-size: 12px; letter-spacing: -.6px; white-space: nowrap; }
.note { width: 50px; height: 40px; }
```
